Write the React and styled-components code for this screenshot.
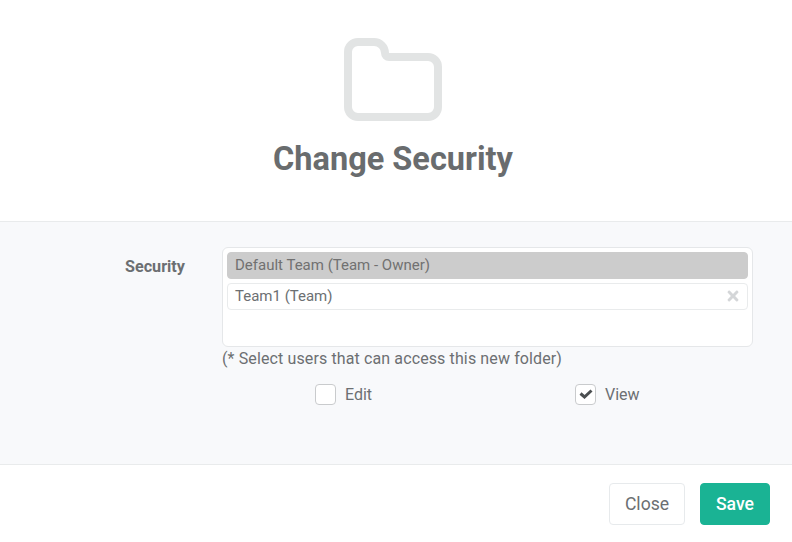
import styled, { createGlobalStyle } from "styled-components";
import { FaTimes } from "react-icons/fa";

const GlobalStyle = createGlobalStyle`
  html, body {
    margin: 0;
    padding: 0;
    background: #fff;
    font-family: Roboto, "Liberation Sans", sans-serif;
    color: #6c6f72;
  }
`;

const Modal = styled.div`
  width: 792px;
  height: 542px;
  display: flex;
  flex-direction: column;
  overflow: hidden;
`;

const Header = styled.header`
  height: 183px;
  padding: 38px 6px 0 0;
  display: flex;
  flex-direction: column;
  align-items: center;
  border-bottom: 1px solid #e9ebec;
`;

const Title = styled.h2`
  margin: 15px 0 0;
  font-size: 32.5px;
  line-height: 44px;
  font-weight: 700;
  color: #696c6e;
`;

const Body = styled.section`
  height: 242px;
  background: #f8f9fb;
  border-bottom: 1px solid #e9ebec;
  display: grid;
  grid-template-columns: 185px 531px;
  column-gap: 37px;
  align-content: start;
`;

const FieldLabel = styled.label`
  margin-top: 35px;
  text-align: right;
  font-size: 16.2px;
  line-height: 19px;
  font-weight: 700;
  color: #6c6f72;
`;

const Field = styled.div`
  padding-top: 25px;
`;

const ListBox = styled.div`
  width: 531px;
  height: 100px;
  box-sizing: border-box;
  padding: 4px;
  display: flex;
  flex-direction: column;
  gap: 4px;
  background: #fff;
  border: 1px solid #e5e7e9;
  border-radius: 6px;
`;

const ListItem = styled.div`
  height: 27px;
  box-sizing: border-box;
  padding: 0 7px 2px;
  display: flex;
  align-items: center;
  justify-content: space-between;
  font-size: 15px;
  border-radius: 4px;
  color: ${(p) => (p.$active ? "#717171" : "#6c6f72")};
  background: ${(p) => (p.$active ? "#cccccc" : "#fff")};
  border: 1px solid ${(p) => (p.$active ? "#cccccc" : "#e9ebec")};
`;

const Remove = styled.span`
  display: flex;
  margin: 0 -1px -1px 0;
  color: #d4d6d8;
  font-size: 16px;
`;

const Hint = styled.p`
  margin: 2px 0 0;
  font-size: 16px;
  letter-spacing: 0.12px;
  line-height: 20px;
  color: #6c6f72;
`;

const Options = styled.div`
  margin-top: 14px;
  display: grid;
  grid-template-columns: 260px auto;
  padding-left: 93px;
`;

const Option = styled.label`
  display: flex;
  align-items: center;
  gap: 9px;
  font-size: 16px;
  line-height: 21px;
  color: #6c6f72;
`;

const OptionText = styled.span`
  padding-top: 1px;
`;

const Box = styled.span`
  width: 21px;
  height: 21px;
  box-sizing: border-box;
  display: flex;
  align-items: center;
  justify-content: center;
  background: #fff;
  border: 1px solid #c9cbcd;
  border-radius: 4px;
`;

const Footer = styled.footer`
  flex: 1;
  padding: 18px 22px 0 0;
  display: flex;
  justify-content: flex-end;
  align-items: flex-start;
  gap: 15px;
`;

const Button = styled.button`
  height: 42px;
  width: ${(p) => (p.$primary ? "70px" : "76px")};
  padding: 0;
  box-sizing: border-box;
  font-family: inherit;
  font-size: 17.6px;
  font-weight: ${(p) => (p.$primary ? 500 : 400)};
  border-radius: 4px;
  border: 1px solid ${(p) => (p.$primary ? "#1ab394" : "#e7eaec")};
  background: ${(p) => (p.$primary ? "#1ab394" : "#fff")};
  color: ${(p) => (p.$primary ? "#fff" : "#6c6f72")};
`;

const FolderIcon = () => (
  <svg width="98" height="84" viewBox="344 38 98 84" fill="none">
    <path
      d="M358 42H374A11 11 0 0 1 385 53A4 4 0 0 0 389 57H428A10 10 0 0 1 438 67V107A10 10 0 0 1 428 117H358A10 10 0 0 1 348 107V52A10 10 0 0 1 358 42Z"
      stroke="#e2e4e4"
      strokeWidth="8"
    />
  </svg>
);

const CheckIcon = () => (
  <svg width="14" height="10" viewBox="0 0 14 10" fill="none">
    <path d="M1.500 4.500L5.500 8L12.500 1.500" stroke="#4b4e50" strokeWidth="3" />
  </svg>
);

export default function App() {
  return (
    <Modal>
      <GlobalStyle />
      <Header>
        <FolderIcon />
        <Title>Change Security</Title>
      </Header>
      <Body>
        <FieldLabel>Security</FieldLabel>
        <Field>
          <ListBox>
            <ListItem $active>Default Team (Team - Owner)</ListItem>
            <ListItem>
              Team1 (Team)
              <Remove>
                <FaTimes />
              </Remove>
            </ListItem>
          </ListBox>
          <Hint>(* Select users that can access this new folder)</Hint>
          <Options>
            <Option>
              <Box />
              <OptionText>Edit</OptionText>
            </Option>
            <Option>
              <Box>
                <CheckIcon />
              </Box>
              <OptionText>View</OptionText>
            </Option>
          </Options>
        </Field>
      </Body>
      <Footer>
        <Button>Close</Button>
        <Button $primary>Save</Button>
      </Footer>
    </Modal>
  );
}
